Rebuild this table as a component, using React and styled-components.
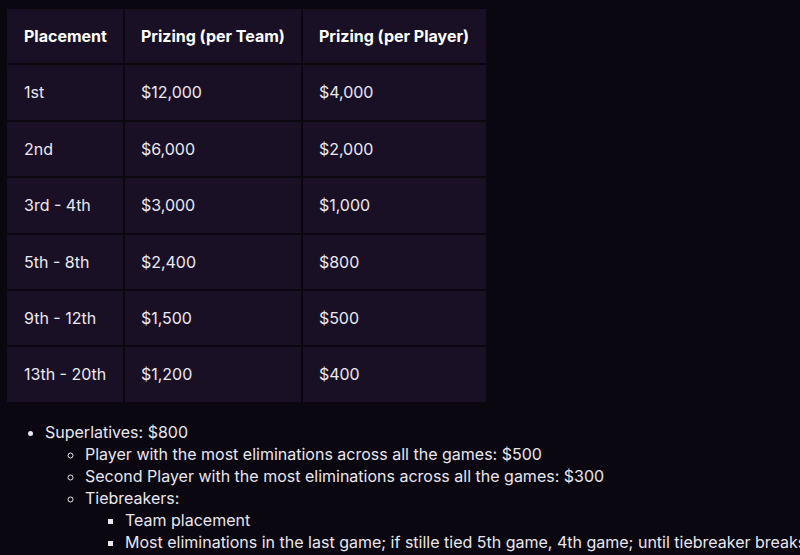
import React from "react";
import styled, { createGlobalStyle } from "styled-components";

const Global = createGlobalStyle`
  html, body {
    margin: 0;
    padding: 0;
    background: #0a0710;
  }
  body {
    font-family: Inter, "Noto Sans", sans-serif;
    color: #e9e6ef;
    overflow: hidden;
  }
`;

const Page = styled.div`
  padding: 7px 0 0 5px;
  min-height: 555px;
  box-sizing: border-box;
  overflow: hidden;
  width: 800px;
`;

const Table = styled.table`
  border-collapse: separate;
  border-spacing: 2px;
  font-size: 16px;
`;

const Cell = styled.td`
  background: #1a1026;
  padding: 15px 16px 15px 16px;
  padding-left: ${(p) => (p.$first ? "17px" : "16px")};
  padding-right: ${(p) => (p.$last ? "17px" : "16px")};
  line-height: 24.4px;
  text-align: left;
  white-space: nowrap;
  color: ${(p) => (p.$head ? "#ffffff" : "#ebe8f0")};
  font-weight: ${(p) => (p.$head ? 700 : 400)};
`;

const List = styled.ul`
  margin: 17px 0 0 0;
  padding-left: 40px;
  font-size: 16px;
  line-height: 22px;
  list-style-type: ${(p) => p.$type};
  white-space: nowrap;
`;

const Item = styled.li`
  color: #e9e6ef;
`;

const SubList = styled(List)`
  margin: 0;
`;

const rows = [
  ["1st", "$12,000", "$4,000"],
  ["2nd", "$6,000", "$2,000"],
  ["3rd - 4th", "$3,000", "$1,000"],
  ["5th - 8th", "$2,400", "$800"],
  ["9th - 12th", "$1,500", "$500"],
  ["13th - 20th", "$1,200", "$400"],
];

const headers = ["Placement", "Prizing (per Team)", "Prizing (per Player)"];

export default function App() {
  return (
    <Page>
      <Global />
      <Table>
        <thead>
          <tr>
            {headers.map((h, i) => (
              <Cell as="th" key={h} $head $first={i === 0} $last={i === 2}>
                {h}
              </Cell>
            ))}
          </tr>
        </thead>
        <tbody>
          {rows.map((r) => (
            <tr key={r[0]}>
              {r.map((c, i) => (
                <Cell key={i} $first={i === 0} $last={i === 2}>
                  {c}
                </Cell>
              ))}
            </tr>
          ))}
        </tbody>
      </Table>
      <List $type="disc">
        <Item>
          Superlatives: $800
          <SubList $type="circle">
            <Item>Player with the most eliminations across all the games: $500</Item>
            <Item>Second Player with the most eliminations across all the games: $300</Item>
            <Item>
              Tiebreakers:
              <SubList $type="square">
                <Item>Team placement</Item>
                <Item>
                  Most eliminations in the last game; if stille tied 5th game, 4th game; until tiebreaker breaks the tie
                </Item>
              </SubList>
            </Item>
          </SubList>
        </Item>
      </List>
    </Page>
  );
}
